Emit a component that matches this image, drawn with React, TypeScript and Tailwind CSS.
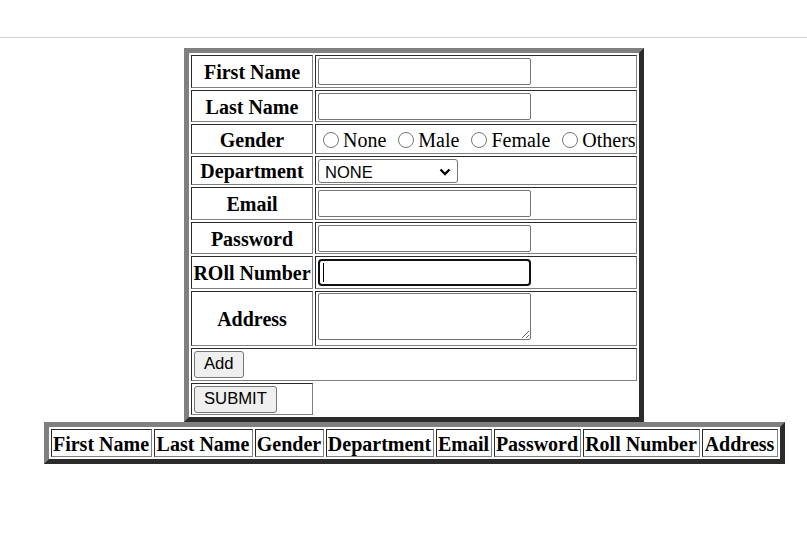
import type { ReactNode } from 'react';

// table border="5": outset outer edge, inset 1px cells
const tableCls =
  "border-separate border-spacing-[2px] border-[5px] border-t-[#808080] border-l-[#808080] border-r-[#2b2b2b] border-b-[#2b2b2b]";
const cellCls = "p-0 border border-t-[#2b2b2b] border-l-[#2b2b2b] border-r-[#808080] border-b-[#808080]";
const serif = "font-['Liberation_Serif','Times_New_Roman',serif]";
const sans = "font-['Liberation_Sans',Arial,sans-serif]";

function TextInput() {
  return <input type="text" className="w-[213px] h-[27px] border border-[#767676] rounded-[2px] bg-white outline-none px-[2px] text-[16px]" />;
}

function Row({ label, h, align = 'center', children }: { label: string; h: string; align?: 'center' | 'start'; children: ReactNode }) {
  return (
    <tr>
      <th className={cellCls}>
        <div className={`${h} w-[120px] flex items-center justify-center pt-[2px] font-bold text-[20px] leading-[23px] whitespace-nowrap`}>{label}</div>
      </th>
      <td className={cellCls}>
        <div className={`${h} w-[320px] flex pl-[2px] ${align === 'start' ? 'items-start pt-[1px]' : 'items-center'}`}>{children}</div>
      </td>
    </tr>
  );
}

const genders = ['None', 'Male', 'Female', 'Others'];
const cols = [
  { t: 'First Name', w: 'w-[99px]' },
  { t: 'Last Name', w: 'w-[97px]' },
  { t: 'Gender', w: 'w-[67px]' },
  { t: 'Department', w: 'w-[106px]' },
  { t: 'Email', w: 'w-[54px]' },
  { t: 'Password', w: 'w-[85px]' },
  { t: 'Roll Number', w: 'w-[115px]' },
  { t: 'Address', w: 'w-[74px]' },
];

export default function App() {
  return (
    <div className={`w-[807px] h-[534px] bg-white text-black ${serif} overflow-hidden`}>
      <div className="h-[38px] border-b border-[#d3d3d3]" />
      <div className="pl-[21px] pt-[10px] flex flex-col items-center">
        <table className={tableCls}>
          <tbody>
            <Row label="First Name" h="h-[31px]"><TextInput /></Row>
            <Row label="Last Name" h="h-[30px]"><TextInput /></Row>
            <Row label="Gender" h="h-[28px]">
              <div className="flex items-center gap-[12px] pl-[5px] pt-[2px] text-[20px] leading-[23px] whitespace-nowrap">
                {genders.map((g) => (
                  <label key={g} className="flex items-center">
                    <span className="w-[16px] h-[16px] mr-[4px] rounded-full border border-[#767676] bg-white" />
                    {g}
                  </label>
                ))}
              </div>
            </Row>
            <Row label="Department" h="h-[27px]">
              <div className="relative w-[140px] h-[24px]">
                <select className={`appearance-none w-full h-full border border-[#767676] rounded-[3px] bg-white pl-[6px] text-[16.5px] ${sans} text-black outline-none`}>
                  <option>NONE</option>
                  <option>CSE</option>
                  <option>IT</option>
                  <option>ECE</option>
                </select>
                <svg className="absolute right-[7px] top-[9px] pointer-events-none" width="12" height="8" viewBox="0 0 12 8">
                  <path d="M1.5 1.5 L6 6 L10.5 1.5" stroke="#000" strokeWidth="2.3" fill="none" />
                </svg>
              </div>
            </Row>
            <Row label="Email" h="h-[31px]"><TextInput /></Row>
            <Row label="Password" h="h-[30px]"><TextInput /></Row>
            <Row label="ROll Number" h="h-[31px]">
              <div className="relative">
                <input type="text" className="w-[213px] h-[27px] border-2 border-[#101010] rounded-[4px] bg-white outline-none" />
                <span className="absolute left-[5px] top-[4px] w-px h-[19px] bg-black" />
              </div>
            </Row>
            <Row label="Address" h="h-[53px]" align="start">
              <textarea className="w-[213px] h-[47px] border border-[#767676] rounded-[2px] bg-white outline-none" />
            </Row>
            <tr>
              <td colSpan={2} className={cellCls}>
                <div className="h-[31px] flex items-center pl-[2px]">
                  <button className={`h-[27px] px-[9px] border border-[#767676] rounded-[3px] bg-[#efefef] text-[16.67px] leading-none ${sans} text-black`}>Add</button>
                </div>
              </td>
            </tr>
            <tr>
              <td className={cellCls}>
                <div className="h-[30px] w-[120px] flex items-center pl-[2px]">
                  <button className={`h-[27px] px-[9px] border border-[#767676] rounded-[3px] bg-[#efefef] text-[16.67px] leading-none ${sans} text-black`}>SUBMIT</button>
                </div>
              </td>
            </tr>
          </tbody>
        </table>
        <table className={tableCls}>
          <thead>
            <tr>
              {cols.map((c) => (
                <th key={c.t} className={cellCls}>
                  <div className={`${c.w} h-[26px] flex items-center justify-center pt-[2px] font-bold text-[20px] leading-[23px] whitespace-nowrap`}>{c.t}</div>
                </th>
              ))}
            </tr>
          </thead>
        </table>
      </div>
    </div>
  );
}
